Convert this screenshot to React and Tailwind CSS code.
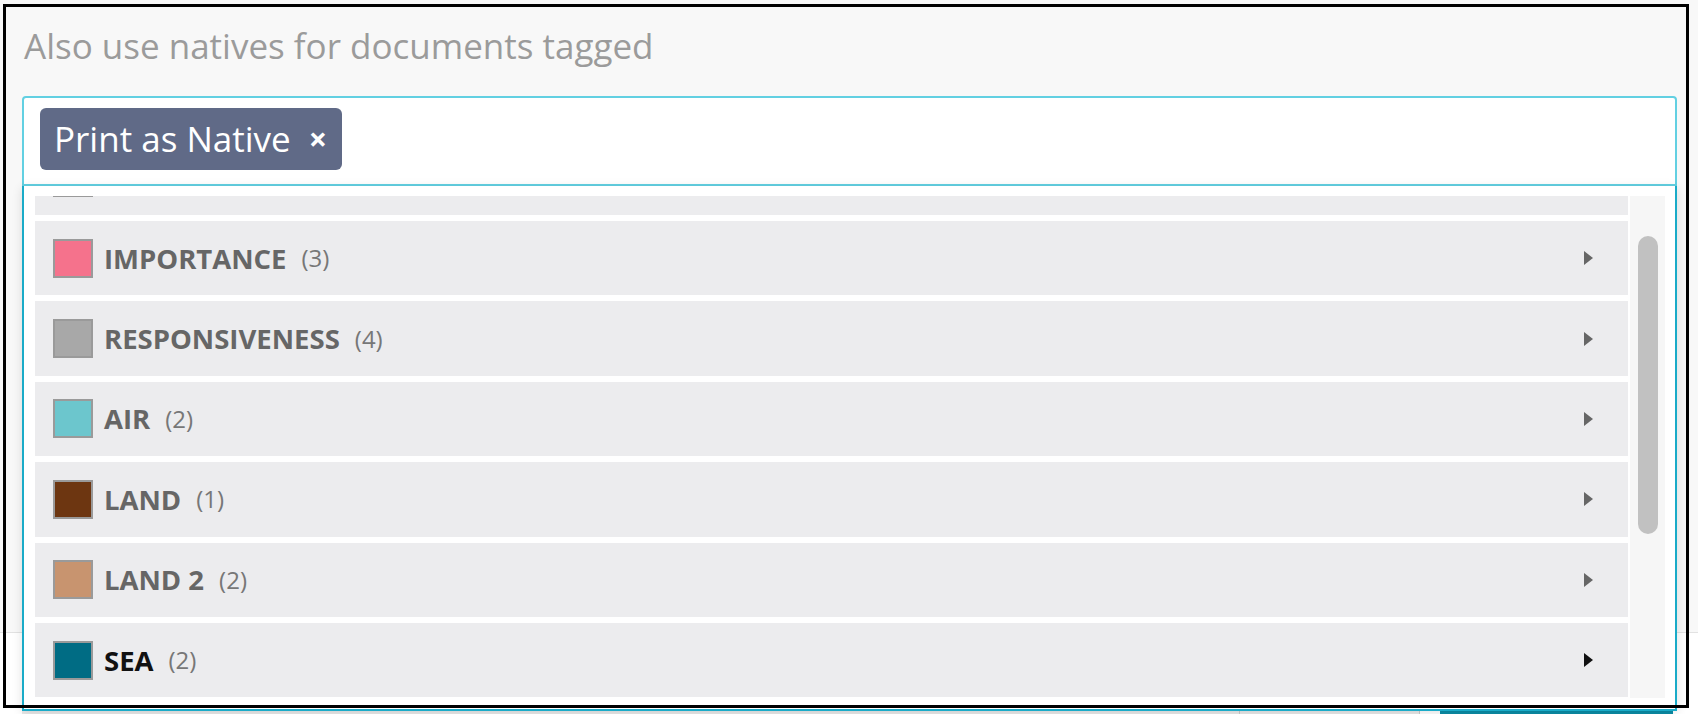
import React from "react";

const tags = [
    { name: "PRIVILEGED", count: 1, color: "#b0b0b0" },
    { name: "IMPORTANCE", count: 3, color: "#f5728c" },
    { name: "RESPONSIVENESS", count: 4, color: "#a8a8a8" },
    { name: "AIR", count: 2, color: "#6cc6cd" },
    { name: "LAND", count: 1, color: "#6d3611" },
    { name: "LAND 2", count: 2, color: "#c8946f" },
    { name: "SEA", count: 2, color: "#006c84", active: true },
    { name: "SKY", count: 1, color: "#8fb8e0" },
];

const TagRow = ({ tag }) => {
    return (
        <div className="flex items-center h-[74.4px] shrink-0 bg-[#ececee] pl-[18px] pr-[35px]">
            <div className="w-[40px] h-[39px] border-2 border-[#9a9a9a]" style={{ backgroundColor: tag.color }} />
            <span className={"ml-[11px] text-[27.5px] font-bold " + (tag.active ? "text-[#111]" : "text-[#666]")}>
                {tag.name}
            </span>
            <span className="ml-[15px] text-[24px] text-[#777]">({tag.count})</span>
            {/* expand arrow */}
            <div className={"ml-auto w-0 h-0 border-y-[7px] border-y-transparent border-l-[9px] " + (tag.active ? "border-l-[#111]" : "border-l-[#666]")} />
        </div>
    );
};

const App = () => {
    return (
        <div className="relative w-[1698px] h-[714px] overflow-hidden bg-white font-['Open_Sans',sans-serif]">
            <div className="h-[633px] bg-[#f8f8f8] border-b border-[#e2e2e2]">
                <p className="pl-[24px] pt-[28px] text-[35px] leading-[35px] text-[#9b9b9b]">
                    Also use natives for documents tagged
                </p>

                <div className="relative ml-[22px] mt-[33px] w-[1655px]">
                    {/* tag input */}
                    <div className="h-[90px] bg-white border-2 border-[#62d0e2] rounded-t-[4px] pl-[16px] pt-[10px]">
                        <div className="inline-flex items-center h-[62px] rounded-[6px] bg-[#606a87] pl-[14px] pr-[15px] text-white">
                            <span className="text-[35px] leading-[48px]">Print as Native</span>
                            <span className="ml-[18px] text-[32px] font-bold leading-[48px]">×</span>
                        </div>
                    </div>

                    {/* dropdown list, scrolled a little */}
                    <div className="absolute left-0 right-0 top-full z-10 h-[525px] bg-white border-x-2 border-b-2 border-[#1aabc8] pt-[10px] pl-[11px] pr-[10px] pb-[11px] shadow-[0_2px_10px_rgba(0,0,0,0.12)]">
                        <div className="flex h-[502px] gap-[2px]">
                            <div className="flex-1 overflow-hidden">
                                <div className="flex flex-col gap-[6px] -mt-[55.4px]">
                                    {tags.map((t) => (
                                        <TagRow key={t.name} tag={t} />
                                    ))}
                                </div>
                            </div>
                            <div className="w-[35px] bg-[#f6f6f6]">
                                <div className="mx-auto mt-[40px] w-[20px] h-[298px] rounded-full bg-[#c1c1c1]" />
                            </div>
                        </div>
                    </div>
                </div>
            </div>

            {/* footer buttons, mostly behind the dropdown */}
            <div className="flex pt-[77px] pl-[22px]">
                <div className="w-[1218px] h-[6px] bg-[#e9e9e9] border-r border-[#c9c9c9]" />
                <div className="w-[180px] h-[6px] bg-[#e9e9e9] border-r border-[#c9c9c9]" />
                <div className="ml-[20px] w-[233px] h-[6px] bg-[#0b8ca6]" />
            </div>

            {/* black outline frame */}
            <div className="absolute left-[3px] top-[4px] w-[1686px] h-[704px] border-[3px] border-black pointer-events-none z-20" />
        </div>
    );
};

export default App;
